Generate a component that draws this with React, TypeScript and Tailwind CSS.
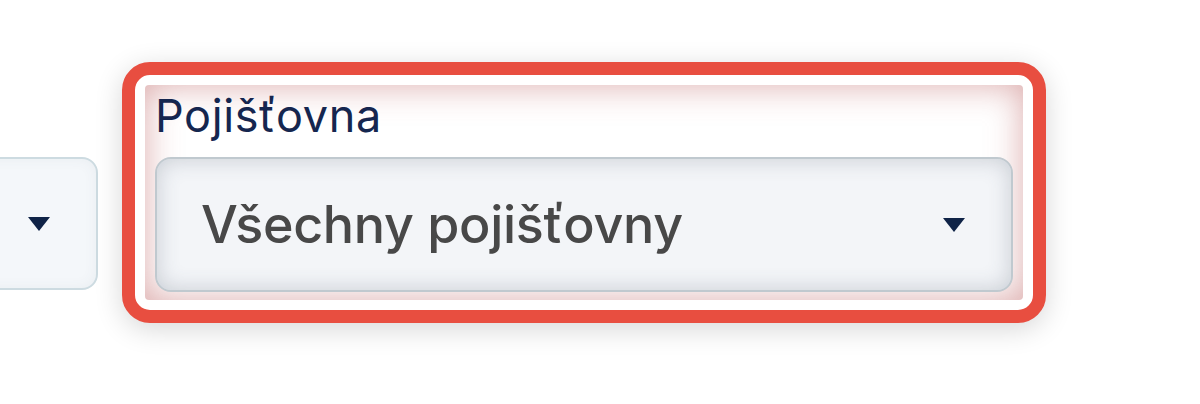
import React from 'react';

const Caret: React.FC = () => (
  <svg width="22" height="14" viewBox="0 0 22 14" className="shrink-0">
    <path d="M0 0 H22 L11 14 Z" fill="#0f2347" />
  </svg>
);

export default function App() {
  return (
    <div
      className="w-[1200px] h-[404px] bg-white overflow-hidden"
      style={{ fontFamily: 'Inter, "Noto Sans", sans-serif' }}
    >
      <div className="flex items-start pt-[62px] -ml-[52px]">
        {/* Previous filter, cut off on the left */}
        <div className="mt-[95px] w-[150px] h-[133px] shrink-0 rounded-[16px] border-2 border-[#cddbe1] bg-[#f4f7fa] shadow-[inset_0_0_14px_rgba(60,80,100,0.06)] flex items-center justify-end pr-[46px]">
          <Caret />
        </div>

        {/* Highlighted filter */}
        <div className="ml-[24px] w-[924px] h-[261px] shrink-0 rounded-[28px] border-[13px] border-[#e84e40] bg-white p-[10px] shadow-[0_6px_28px_rgba(0,0,0,0.16)]">
          <div className="h-full rounded-[4px] bg-white shadow-[inset_0_0_34px_rgba(190,100,100,0.55)] pl-[10px] pr-[10px] pt-[4px] flex flex-col">
            <label className="text-[45px] leading-[54px] text-[#15264f] tracking-[0.6px]">
              Pojišťovna
            </label>
            <div className="mt-[14px] h-[135px] rounded-[16px] border-2 border-[#c0c9cf] bg-[#f3f5f8] shadow-[inset_0_0_22px_rgba(60,70,90,0.24)] flex items-center justify-between pl-[44px] pr-[46px]">
              <span className="text-[52px] font-medium text-[#484848] tracking-[-0.3px]">
                Všechny pojišťovny
              </span>
              <Caret />
            </div>
          </div>
        </div>
      </div>
    </div>
  );
}
